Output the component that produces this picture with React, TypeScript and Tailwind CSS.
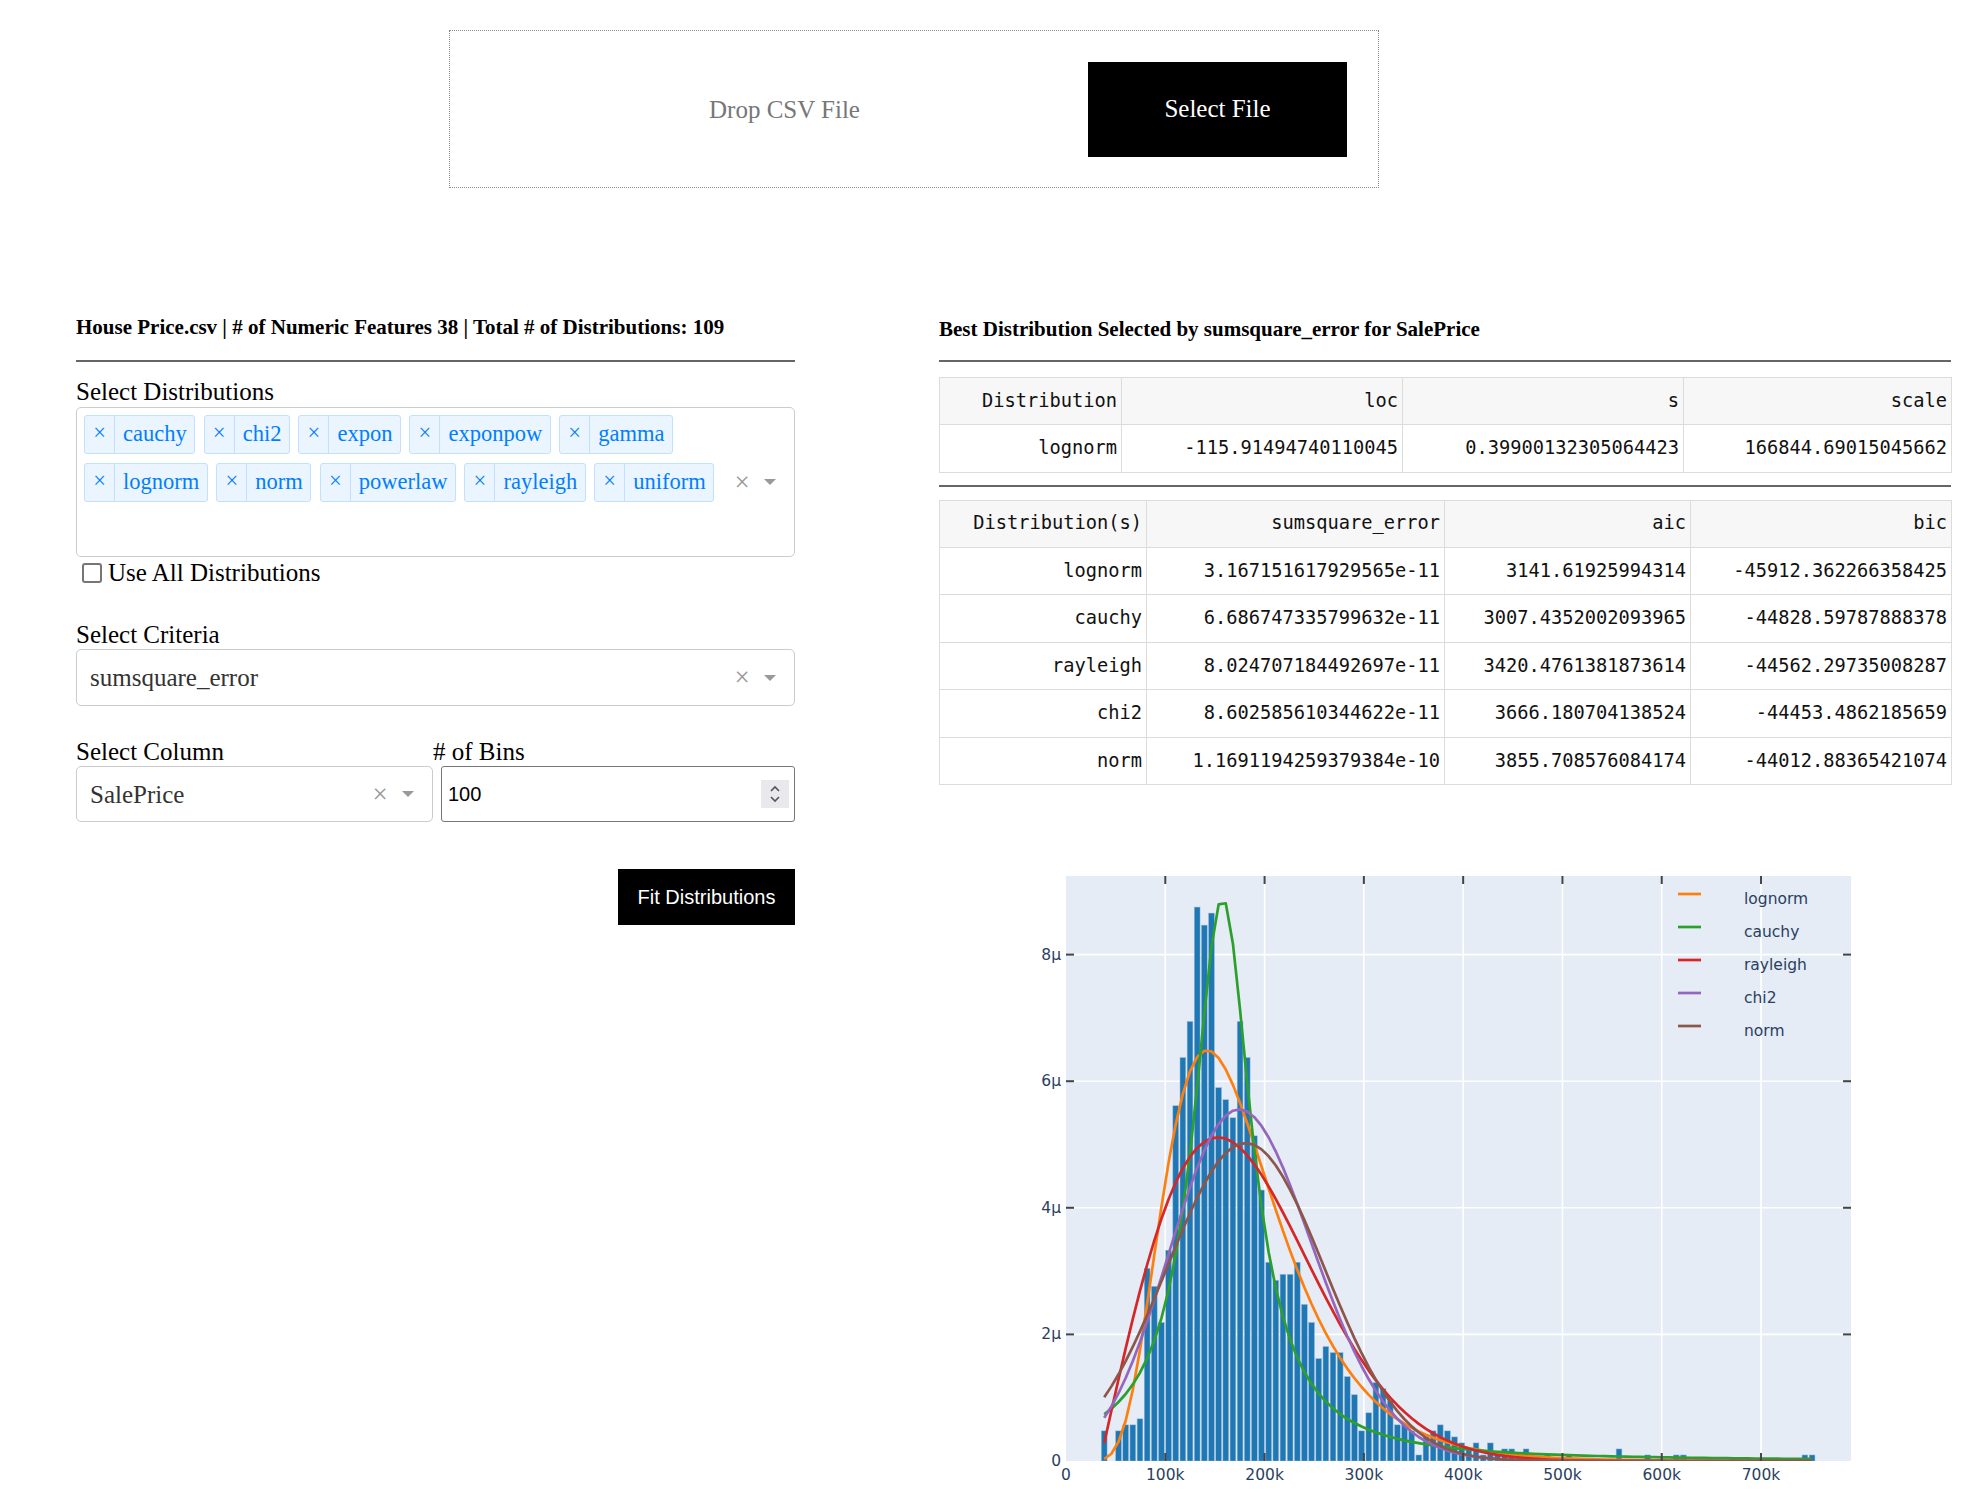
import React from "react";

// page offset of the chart svg
const OX = 939;
const OY = 800;
const L = 1066 - OX;
const R = 1851 - OX;
const T = 874 - OY;
const B = 1459 - OY;
const xs = (v: number) => L + v * 0.0009929;
const ys = (u: number) => B - u * 63.3;

const BIN0 = 34900;
const BW = 7201;
const COUNTS = [
  5, 0, 5, 6, 6, 7, 32, 29, 23, 35,
  59, 67, 73, 92, 89, 91, 62, 60, 57, 73,
  67, 54, 45, 33, 30, 31, 31, 33, 26, 23,
  17, 19, 18, 18, 14, 11, 5, 8, 13, 12,
  10, 6, 6, 5, 1, 4, 5, 6, 5, 4,
  3, 2, 3, 1, 3, 1, 2, 2, 1, 2,
  0, 0, 1, 0, 0, 1, 0, 0, 0, 0,
  0, 0, 2, 0, 0, 0, 1, 0, 0, 0,
  1, 1, 0, 0, 0, 0, 0, 0, 0, 0,
  0, 0, 0, 0, 0, 0, 0, 0, 1, 1,
];
const PER = 1e6 / (1460 * BW);
const centers = COUNTS.map((_, k) => BIN0 + (k + 0.5) * BW);
const SQ2PI = Math.sqrt(2 * Math.PI);

const lognorm = (x: number) => {
  const s = 0.39900132305064423;
  const y = (x + 115.91494740110045) / 166844.69015045662;
  if (y <= 0) return 0;
  const l = Math.log(y);
  return (Math.exp((-l * l) / (2 * s * s)) / (s * y * SQ2PI) / 166844.69015045662) * 1e6;
};
const cauchy = (x: number) => {
  const g = 35800;
  const z = (x - 157500) / g;
  return (1 / (Math.PI * g * (1 + z * z))) * 1e6;
};
const rayleigh = (x: number) => {
  const sg = 118600;
  const y = (x - 34500) / sg;
  if (y <= 0) return 0;
  return ((y * Math.exp((-y * y) / 2)) / sg) * 1e6;
};
const lgamma = (z: number) =>
  (z - 0.5) * Math.log(z) - z + 0.5 * Math.log(2 * Math.PI) + 1 / (12 * z) - 1 / (360 * z * z * z);
const chi2 = (x: number) => {
  const a = 80;
  const th = 8072;
  const y = (x + 463300) / th;
  if (y <= 0) return 0;
  return (Math.exp((a - 1) * Math.log(y) - y - lgamma(a)) / th) * 1e6;
};
const norm = (x: number) => {
  const z = (x - 180921.2) / 79415.3;
  return (Math.exp((-z * z) / 2) / (79415.3 * SQ2PI)) * 1e6;
};

const curves = [
  { name: "lognorm", color: "#ff7f0e", f: lognorm },
  { name: "cauchy", color: "#2ca02c", f: cauchy },
  { name: "rayleigh", color: "#d62728", f: rayleigh },
  { name: "chi2", color: "#9467bd", f: chi2 },
  { name: "norm", color: "#8c564b", f: norm },
];

const tags = ["cauchy", "chi2", "expon", "exponpow", "gamma", "lognorm", "norm", "powerlaw", "rayleigh", "uniform"];

const bestRows = [["lognorm", "-115.91494740110045", "0.39900132305064423", "166844.69015045662"]];
const fitRows = [
  ["lognorm", "3.167151617929565e-11", "3141.61925994314", "-45912.362266358425"],
  ["cauchy", "6.686747335799632e-11", "3007.4352002093965", "-44828.59787888378"],
  ["rayleigh", "8.024707184492697e-11", "3420.4761381873614", "-44562.29735008287"],
  ["chi2", "8.602585610344622e-11", "3666.180704138524", "-44453.4862185659"],
  ["norm", "1.1691194259379384e-10", "3855.708576084174", "-44012.88365421074"],
];

function ClearArrow() {
  return (
    <>
      <div className="flex w-[26px] items-center justify-center text-[27px] leading-none text-[#999]">×</div>
      <div className="flex w-[30px] items-center justify-center">
        <div className="h-0 w-0 border-x-[6.25px] border-t-[6.5px] border-x-transparent border-t-[#999]" />
      </div>
    </>
  );
}

function SelectBox({ value, className }: { value: string; className: string }) {
  return (
    <div className={`flex items-center rounded-[5px] border border-[#ccc] bg-white pr-[9px] ${className}`}>
      <div className="flex-1 pl-[13px] text-[25px] leading-none text-[#333]">{value}</div>
      <ClearArrow />
    </div>
  );
}

function LeftPanel() {
  return (
    <div className="flex w-[719px] flex-col">
      <div className="mt-[127px] text-[21px] font-bold leading-[24px]">
        House Price.csv | # of Numeric Features 38 | Total # of Distributions: 109
      </div>
      <div className="mt-[21px] h-[2px] bg-[#666]" />

      <div className="mt-[15px] text-[25px] leading-[30px]">Select Distributions</div>
      <div className="flex h-[150px] rounded-[5px] border border-[#ccc] pr-[9px]">
        <div className="flex flex-1 flex-wrap content-start gap-x-[8.5px] gap-y-[9px] pl-[7px] pt-[7px]">
          {tags.map((t) => (
            <div
              key={t}
              className="flex h-[39px] items-stretch rounded-[3px] border border-[#c2e0ff] bg-[#ebf5ff] text-[22.5px] text-[#007eff]"
            >
              <span className="flex w-[30px] items-center justify-center border-r border-[#c2e0ff] pb-[3px] leading-none">
                ×
              </span>
              <span className="flex items-center pl-[8px] pr-[7.5px] leading-none">{t}</span>
            </div>
          ))}
        </div>
        <ClearArrow />
      </div>
      <div className="flex h-[31px] items-center">
        <div className="ml-[6px] h-[20px] w-[20px] rounded-[3px] border-2 border-[#767676] bg-white" />
        <span className="ml-[6px] text-[25px] leading-none">Use All Distributions</span>
      </div>

      <div className="mt-[32px] text-[25px] leading-[29px]">Select Criteria</div>
      <SelectBox value="sumsquare_error" className="h-[57px]" />

      <div className="mt-[31px] flex">
        <div className="w-[359px]">
          <div className="text-[25px] leading-[29px]">Select Column</div>
          <SelectBox value="SalePrice" className="h-[56px]" />
        </div>
        <div className="flex-1">
          <div className="text-[25px] leading-[29px]">&#35; of Bins</div>
          <div className="ml-[8px] flex h-[56px] w-[354px] items-center rounded-[3px] border border-[#767676] pl-[6px] pr-[5px]">
            <span className="flex-1 font-['Liberation_Sans',sans-serif] text-[20px] leading-none">100</span>
            <div className="flex h-[28px] w-[28px] items-center justify-center bg-[#e9e9ed]">
              <svg width="14" height="22" viewBox="0 0 14 22" fill="none" stroke="#555" strokeWidth="1.6">
                <path d="M3 8l4-4 4 4" />
                <path d="M3 14l4 4 4-4" />
              </svg>
            </div>
          </div>
        </div>
      </div>

      <button className="mt-[47px] h-[56px] w-[177px] self-end bg-black font-['Liberation_Sans',sans-serif] text-[20px] text-white">
        Fit Distributions
      </button>
    </div>
  );
}

function DataTable({ head, rows, widths }: { head: string[]; rows: string[][]; widths: string[] }) {
  return (
    <table className="w-[1012px] table-fixed border-collapse font-['DejaVu_Sans_Mono',monospace] text-[18.7px] text-[#111]">
      <colgroup>
        {widths.map((w, i) => (
          <col key={i} className={w} />
        ))}
      </colgroup>
      <thead>
        <tr className="bg-[#f7f7f7]">
          {head.map((h) => (
            <th key={h} className="h-[47px] border border-[#dcdcdc] px-[4px] text-right font-normal">
              {h}
            </th>
          ))}
        </tr>
      </thead>
      <tbody>
        {rows.map((r) => (
          <tr key={r[0]}>
            {r.map((c, i) => (
              <td key={i} className="h-[47.5px] border border-[#dcdcdc] px-[4px] text-right">
                {c}
              </td>
            ))}
          </tr>
        ))}
      </tbody>
    </table>
  );
}

function Chart() {
  const yTicks = [2, 4, 6, 8];
  const xTicks = [100000, 200000, 300000, 400000, 500000, 600000, 700000];
  const bw = BW * 0.0009929 * 0.8;
  return (
    <svg width="1012" height="700" className="mt-[17px] font-['DejaVu_Sans',sans-serif]">
      <defs>
        <clipPath id="plotclip">
          <rect x={L} y={T} width={R - L} height={B - T} />
        </clipPath>
      </defs>
      <rect x={L} y={T} width={R - L} height={B - T} fill="#e5ecf6" />
      {xTicks.map((t) => (
        <line key={t} x1={xs(t)} x2={xs(t)} y1={T} y2={B} stroke="#fff" strokeWidth="1.6" />
      ))}
      {yTicks.map((t) => (
        <line key={t} x1={L} x2={R} y1={ys(t)} y2={ys(t)} stroke="#fff" strokeWidth="1.6" />
      ))}
      <g clipPath="url(#plotclip)">
        {COUNTS.map((c, k) =>
          c > 0 ? (
            <rect
              key={k}
              x={xs(centers[k]) - bw / 2}
              y={ys(c * PER)}
              width={bw}
              height={B - ys(c * PER)}
              fill="#1f77b4"
              stroke="#8fb8da"
              strokeWidth="0.5"
            />
          ) : null
        )}
        {curves.map((cv) => (
          <polyline
            key={cv.name}
            points={centers.map((x) => `${xs(x).toFixed(2)},${ys(cv.f(x)).toFixed(2)}`).join(" ")}
            fill="none"
            stroke={cv.color}
            strokeWidth="2.7"
            strokeLinejoin="round"
          />
        ))}
      </g>
      {/* inside ticks, mirrored */}
      {yTicks.map((t) => (
        <g key={t} stroke="#444" strokeWidth="2">
          <line x1={L} x2={L + 8} y1={ys(t)} y2={ys(t)} />
          <line x1={R - 8} x2={R} y1={ys(t)} y2={ys(t)} />
        </g>
      ))}
      {xTicks.map((t) => (
        <g key={t} stroke="#444" strokeWidth="2">
          <line x1={xs(t)} x2={xs(t)} y1={T} y2={T + 8} />
          <line x1={xs(t)} x2={xs(t)} y1={B - 8} y2={B} />
        </g>
      ))}
      <g className="fill-[#2a3f5f] text-[15.5px]">
        {[0, ...yTicks].map((t) => (
          <text key={t} x={L - 5} y={ys(t)} textAnchor="end" dominantBaseline="central">
            {t === 0 ? "0" : `${t}µ`}
          </text>
        ))}
        {[0, ...xTicks].map((t) => (
          <text key={t} x={xs(t)} y={673} textAnchor="middle" dominantBaseline="central">
            {t === 0 ? "0" : `${t / 1000}k`}
          </text>
        ))}
        {curves.map((cv, i) => (
          <g key={cv.name}>
            <line x1={739} x2={762} y1={92 + 33 * i} y2={92 + 33 * i} stroke={cv.color} strokeWidth="2.7" />
            <text x={805} y={97 + 33 * i} dominantBaseline="central">
              {cv.name}
            </text>
          </g>
        ))}
      </g>
    </svg>
  );
}

function RightPanel() {
  return (
    <div className="ml-[144px] flex w-[1012px] flex-col">
      <div className="mt-[129px] text-[21px] font-bold leading-[24px]">
        Best Distribution Selected by sumsquare_error for SalePrice
      </div>
      <div className="mt-[19px] h-[2px] bg-[#666]" />
      <div className="mt-[15px]">
        <DataTable
          head={["Distribution", "loc", "s", "scale"]}
          rows={bestRows}
          widths={["w-[182px]", "w-[281px]", "w-[281px]", "w-[268px]"]}
        />
      </div>
      <div className="mt-[12px] h-[2px] bg-[#666]" />
      <div className="mt-[13px]">
        <DataTable
          head={["Distribution(s)", "sumsquare_error", "aic", "bic"]}
          rows={fitRows}
          widths={["w-[207px]", "w-[298px]", "w-[246px]", "w-[261px]"]}
        />
      </div>
      <Chart />
    </div>
  );
}

export default function App() {
  return (
    <div className="min-h-[1500px] bg-white font-['Liberation_Serif',serif] text-black">
      <div className="ml-[449px] mt-[30px] inline-flex h-[158px] w-[930px] items-center border-[1.5px] border-dotted border-[#8a8a8a] p-[31px] align-top">
        <div className="flex-1 text-center text-[25px] leading-none text-[#777]">Drop CSV File</div>
        <button className="h-[95px] w-[259px] bg-black text-[25px] text-white">Select File</button>
      </div>
      <div className="flex pl-[76px]">
        <LeftPanel />
        <RightPanel />
      </div>
    </div>
  );
}
